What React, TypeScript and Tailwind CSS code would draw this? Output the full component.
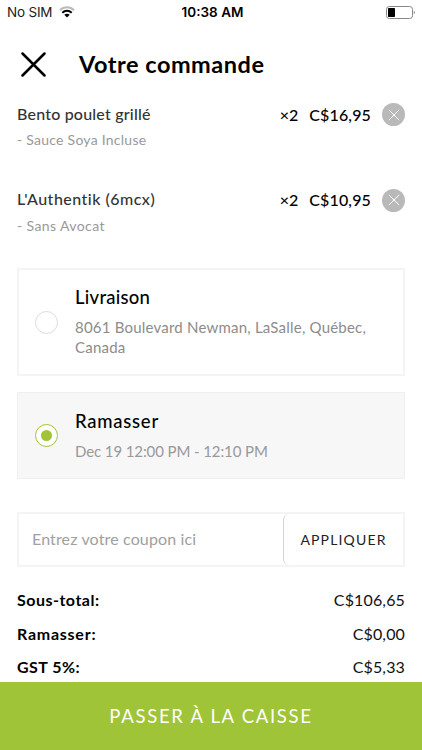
import React from 'react';

const items = [
  { name: 'Bento poulet grillé', note: '- Sauce Soya Incluse', price: 'C$16,95', nameSpacing: 'tracking-[0.2px]', noteSpacing: 'tracking-[0.25px]' },
  { name: "L'Authentik (6mcx)", note: '- Sans Avocat', price: 'C$10,95', nameSpacing: 'tracking-[0.48px]', noteSpacing: 'tracking-[0.4px]' },
];

const totals = [
  { label: 'Sous-total:', value: 'C$106,65', spacing: 'tracking-[0.5px]' },
  { label: 'Ramasser:', value: 'C$0,00', spacing: 'tracking-[0.75px]' },
  { label: 'GST 5%:', value: 'C$5,33', spacing: 'tracking-[0.45px]' },
];

const StatusBar: React.FC = () => (
  <div className="flex h-6 items-center justify-between pr-[7px] pl-[7px] font-['Inter',sans-serif] text-[13.5px] text-[#222]">
    <div className="flex w-[120px] items-center gap-[7px]">
      <span className="tracking-[-0.2px]">No SIM</span>
      <svg width="16" height="12" viewBox="0 0 16 12" fill="none">
        <path d="M1 4.2C4.8 .3 11.2 .3 15 4.2" stroke="#bbb" strokeWidth="2" />
        <path d="M3.3 6.7C6 4.1 10 4.1 12.7 6.7" stroke="#000" strokeWidth="2" />
        <path d="M8 11.5 5.3 8.8C6.8 7.4 9.2 7.4 10.7 8.8Z" fill="#000" />
      </svg>
    </div>
    <span className="pl-[3px] text-[13.5px] font-semibold text-black">10:38 AM</span>
    <div className="flex w-[120px] justify-end">
      <svg width="29" height="13" viewBox="0 0 29 13" fill="none">
        <rect x=".5" y=".5" width="26" height="12" rx="2.8" stroke="#888" />
        <rect x="2" y="2" width="7" height="9" rx=".8" fill="#000" />
        <path d="M27.8 4.5C29 5 29 8 27.8 8.5Z" fill="#777" />
      </svg>
    </div>
  </div>
);

const App: React.FC = () => {
  return (
    <div className="flex h-[750px] w-[422px] flex-col overflow-hidden bg-white font-['Lato',sans-serif] text-black">
      <StatusBar />
      <header className="flex h-[79px] shrink-0 items-center pl-[21px]">
        <button className="pt-px" aria-label="Fermer">
          <svg width="25" height="25" viewBox="0 0 25 25" stroke="#000" strokeWidth="2.5" strokeLinecap="round">
            <path d="M1.5 1.5 23.5 23.5M23.5 1.5 1.5 23.5" />
          </svg>
        </button>
        <h1 className="ml-[33px] text-[23.5px] leading-8 font-bold tracking-[0.52px]">Votre commande</h1>
      </header>

      <main className="flex min-h-0 flex-1 flex-col overflow-hidden px-[17px]">
        {items.map((item) => (
          <div key={item.name} className="h-[85.5px] shrink-0">
            <div className="flex h-[23px] items-center text-[16px]">
              <span className={`flex-1 pb-[2px] font-medium text-[#333] ${item.nameSpacing}`}>{item.name}</span>
              <span className="mr-[11px] font-medium">×2</span>
              <span className="font-medium tracking-[0.15px]">{item.price}</span>
              <button className="ml-[11px] flex size-[23px] items-center justify-center rounded-full bg-[#b9b9b9]" aria-label="Supprimer">
                <svg width="12" height="12" viewBox="0 0 12 12" stroke="#fff" strokeWidth="1">
                  <path d="M.8.8 11.2 11.2M11.2.8.8 11.2" />
                </svg>
              </button>
            </div>
            <p className={`mt-[4px] text-[14px] leading-5 text-[#999] ${item.noteSpacing}`}>{item.note}</p>
          </div>
        ))}

        <div className="-mt-[6px] flex h-[108px] shrink-0 items-center border-2 border-[#f4f4f4] pl-4">
          <span className="size-[23px] rounded-full border border-[#ddd]" />
          <div className="ml-[17px] pb-[2px]">
            <h2 className="-mt-px text-[18.5px] leading-6 font-medium tracking-[0.25px]">Livraison</h2>
            <p className="mt-[8px] text-[15px] leading-[20px] tracking-[0.21px] text-[#8c8c8c]">
              8061 Boulevard Newman, LaSalle, Québec,
              <br />
              Canada
            </p>
          </div>
        </div>

        <div className="mt-[16px] flex h-[87px] shrink-0 items-center border border-[#f0f0f0] bg-[#f7f7f7] pl-[17px]">
          <span className="flex size-[23px] items-center justify-center rounded-full border border-[#a0c437] bg-white">
            <span className="size-[11px] rounded-full bg-[#a0c437]" />
          </span>
          <div className="ml-[17px]">
            <h2 className="-mt-px text-[18.5px] leading-6 font-medium tracking-[0.75px]">Ramasser</h2>
            <p className="mt-[8px] text-[15px] leading-[20px] tracking-[-0.1px] text-[#999]">Dec 19 12:00 PM - 12:10 PM</p>
          </div>
        </div>

        <div className="mt-[33px] flex h-[55px] shrink-0 border-2 border-[#f4f4f4]">
          <span className="flex flex-1 items-center pb-px pl-[13px] text-[16px] tracking-[0.14px] text-[#a0a0a0]">Entrez votre coupon ici</span>
          <button className="w-[120px] rounded-[6px] border-l border-[#d4d4d4] text-[14px] tracking-[1.15px] text-[#222]">APPLIQUER</button>
        </div>

        <div className="mt-[16px]">
          {totals.map((row) => (
            <div key={row.label} className="flex h-[33.7px] items-center justify-between text-[16px]">
              <span className={`font-bold ${row.spacing}`}>{row.label}</span>
              <span className="tracking-[0.15px] text-[#111]">{row.value}</span>
            </div>
          ))}
        </div>
      </main>

      <button className="h-[68px] shrink-0 bg-[#a0c437] pt-[2px] text-[18.5px] tracking-[1.7px] text-white">PASSER À LA CAISSE</button>
    </div>
  );
};

export default App;
